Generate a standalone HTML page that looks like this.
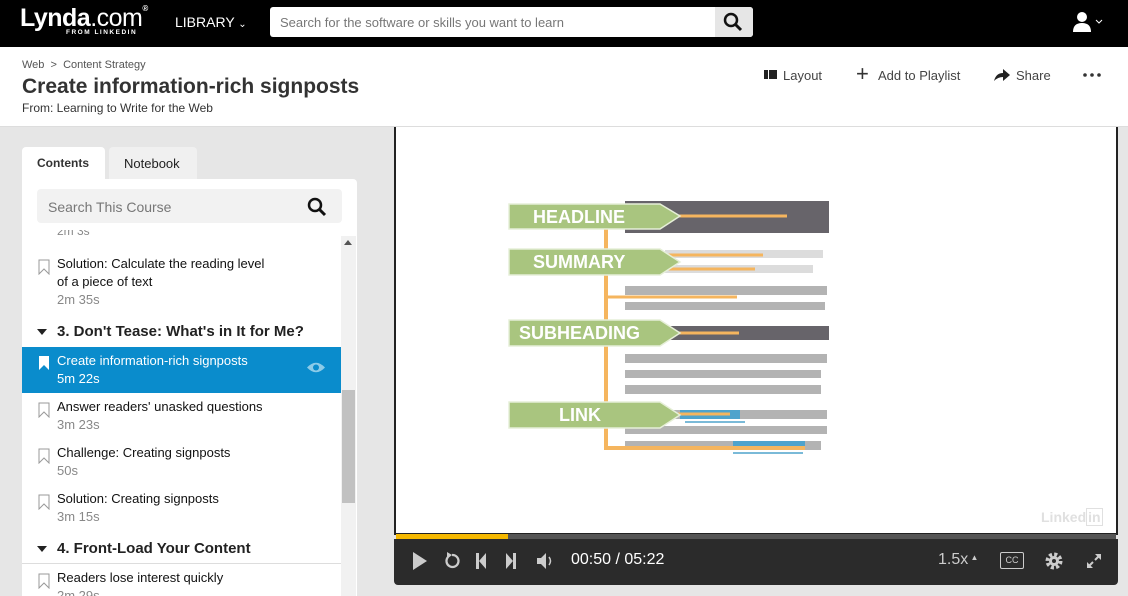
<!DOCTYPE html>
<html><head><meta charset="utf-8"><style>
*{margin:0;padding:0;box-sizing:border-box}
html,body{width:1128px;height:596px;overflow:hidden}
body{background:#e6e6e6;font-family:"Liberation Sans",sans-serif;position:relative}
.a{position:absolute}
.top{left:0;top:0;width:1128px;height:47px;background:#000}
.hdr{left:0;top:47px;width:1128px;height:80px;background:#fff;border-bottom:1px solid #ddd}
.item{position:absolute;left:22px;width:319px;font-size:13px;color:#111}
.item .t{position:absolute;left:35px;top:0;line-height:18px}
.item .d{color:#888}
.bm{position:absolute;left:16px;top:4px}
.sec{position:absolute;left:22px;width:319px;font-size:15px;font-weight:bold;color:#222}
.sec span{position:absolute;left:35px}
.tri{position:absolute;left:15px;top:6px;width:0;height:0;border-left:5px solid transparent;border-right:5px solid transparent;border-top:6px solid #222}
</style></head><body>
<div class="a top"></div>
<div class="a" style="left:20px;top:4px;color:#fff;font-size:25px;font-weight:bold;letter-spacing:-0.5px">Lynda<span style="font-weight:normal">.com</span><sup style="font-size:8px;vertical-align:top">®</sup></div>
<div class="a" style="left:66px;top:29px;color:#fff;font-size:6.5px;font-weight:bold;letter-spacing:1.5px">FROM LINKEDIN</div>
<div class="a" style="left:175px;top:14px;color:#fff;font-size:14px">LIBRARY <span style="font-size:10px">&#8964;</span></div>
<div class="a" style="left:270px;top:7px;width:483px;height:30px;background:#fff;border-radius:3px"></div>
<div class="a" style="left:280px;top:15px;font-size:13px;color:#777">Search for the software or skills you want to learn</div>
<div class="a" style="left:715px;top:7px;width:38px;height:30px;background:#e6e6e6;border-radius:0 3px 3px 0"></div>
<svg class="a" style="left:723px;top:12px" width="20" height="20"><circle cx="8" cy="8" r="6" stroke="#111" stroke-width="2.5" fill="none"/><line x1="12.5" y1="12.5" x2="18" y2="18" stroke="#111" stroke-width="3"/></svg>
<svg class="a" style="left:1072px;top:11px" width="36" height="22"><circle cx="10" cy="6" r="5" fill="#fff"/><path d="M1 21 Q1 12 10 12 Q19 12 19 21Z" fill="#fff"/><path d="M24 9 l3 3 l3 -3" stroke="#fff" fill="none"/></svg>
<div class="a hdr"></div>
<div class="a" style="left:22px;top:59px;font-size:11px;color:#555">Web &nbsp;&gt;&nbsp; Content Strategy</div>
<div class="a" style="left:22px;top:75px;font-size:21px;font-weight:bold;color:#333">Create information-rich signposts</div>
<div class="a" style="left:22px;top:101px;font-size:12px;color:#333">From: Learning to Write for the Web</div>
<div class="a" style="left:764px;top:70px;width:4px;height:9px;background:#222"></div><div class="a" style="left:769px;top:70px;width:8px;height:9px;background:#222"></div>
<div class="a" style="left:783px;top:68px;font-size:13px;color:#444">Layout</div>
<div class="a" style="left:856px;top:61px;font-size:22px;color:#333;font-weight:100">+</div>
<div class="a" style="left:878px;top:68px;font-size:13px;color:#444">Add to Playlist</div>
<svg class="a" style="left:993px;top:68px" width="18" height="14"><path d="M1 13 Q3 5 10 5 V1 L17 7 L10 13 V9 Q5 9 1 13Z" fill="#222"/></svg>
<div class="a" style="left:1016px;top:68px;font-size:13px;color:#444">Share</div>
<svg class="a" style="left:1082px;top:72px" width="20" height="6"><circle cx="3" cy="3" r="1.8" fill="#333"/><circle cx="10" cy="3" r="1.8" fill="#333"/><circle cx="17" cy="3" r="1.8" fill="#333"/></svg>

<div class="a" style="left:22px;top:147px;width:83px;height:34px;background:#fff;border-radius:4px 4px 0 0"></div>
<div class="a" style="left:37px;top:156px;font-size:12px;font-weight:bold;color:#333">Contents</div>
<div class="a" style="left:109px;top:147px;width:88px;height:32px;background:#f0f0f0;border-radius:4px 4px 0 0"></div>
<div class="a" style="left:124px;top:156px;font-size:13px;color:#222">Notebook</div>
<div class="a" style="left:22px;top:179px;width:335px;height:417px;background:#fff;border-radius:0 4px 0 0"></div>
<div class="a" style="left:37px;top:189px;width:305px;height:34px;background:#f2f2f2;border-radius:4px"></div>
<div class="a" style="left:48px;top:199px;font-size:14px;color:#777">Search This Course</div>
<svg class="a" style="left:307px;top:197px" width="20" height="20"><circle cx="8" cy="8" r="6" stroke="#111" stroke-width="2.5" fill="none"/><line x1="12.5" y1="12.5" x2="18" y2="18" stroke="#111" stroke-width="3"/></svg>
<div class="a" style="left:341px;top:236px;width:15px;height:360px;background:#f1f1f1"></div>
<div class="a" style="left:342px;top:390px;width:13px;height:113px;background:#c1c1c1"></div>
<div class="a" style="left:344px;top:240px;border-left:4px solid transparent;border-right:4px solid transparent;border-bottom:5px solid #555"></div>
<div class="a" style="left:57px;top:230px;font-size:12px;color:#888;height:8px;overflow:hidden;line-height:3px">2m 3s</div>

<div class="item" style="top:255px;height:50px"><svg class="bm" width="12" height="16"><path d="M1 1H11V15L6 10L1 15Z" stroke="#999" fill="none"/></svg><div class="t">Solution: Calculate the reading level<br>of a piece of text<br><span class="d">2m 35s</span></div></div>
<div class="sec" style="top:323px"><div class="tri"></div><span>3. Don't Tease: What's in It for Me?</span></div>
<div class="item" style="top:347px;height:46px;background:#0a8ccc;color:#fff"><svg class="bm" style="top:8px" width="12" height="16"><path d="M1 1H11V15L6 10L1 15Z" fill="#fff"/></svg><div class="t" style="top:5px">Create information-rich signposts<br>5m 22s</div><svg style="position:absolute;left:284px;top:14px" width="20" height="13"><path d="M1 6.5 Q10 -3 19 6.5 Q10 16 1 6.5Z" fill="#8ccbe8"/><circle cx="10" cy="6.5" r="3" fill="#0a8ccc"/></svg></div>
<div class="item" style="top:398px"><svg class="bm" width="12" height="16"><path d="M1 1H11V15L6 10L1 15Z" stroke="#999" fill="none"/></svg><div class="t">Answer readers' unasked questions<br><span class="d">3m 23s</span></div></div>
<div class="item" style="top:444px"><svg class="bm" width="12" height="16"><path d="M1 1H11V15L6 10L1 15Z" stroke="#999" fill="none"/></svg><div class="t">Challenge: Creating signposts<br><span class="d">50s</span></div></div>
<div class="item" style="top:490px"><svg class="bm" width="12" height="16"><path d="M1 1H11V15L6 10L1 15Z" stroke="#999" fill="none"/></svg><div class="t">Solution: Creating signposts<br><span class="d">3m 15s</span></div></div>
<div class="sec" style="top:540px"><div class="tri"></div><span>4. Front-Load Your Content</span></div>
<div class="a" style="left:22px;top:563px;width:319px;height:1px;background:#ddd"></div>
<div class="item" style="top:569px;height:27px;overflow:hidden"><svg class="bm" width="12" height="16"><path d="M1 1H11V15L6 10L1 15Z" stroke="#999" fill="none"/></svg><div class="t">Readers lose interest quickly<br><span class="d">2m 29s</span></div></div>

<div class="a" style="left:394px;top:127px;width:724px;height:408px;background:#fff;border:2px solid #222;border-top:none"></div>
<svg class="a" style="left:505px;top:198px" width="330" height="260">
<rect x="120" y="3" width="204" height="32" fill="#67646a"/>
<rect x="160" y="52" width="158" height="8" fill="#dcdcdc"/><rect x="160" y="67" width="148" height="8" fill="#dcdcdc"/>
<rect x="120" y="88" width="202" height="9" fill="#b3b3b3"/><rect x="120" y="104" width="200" height="8" fill="#b3b3b3"/>
<rect x="160" y="128" width="164" height="14" fill="#67646a"/>
<rect x="120" y="156" width="202" height="9" fill="#b3b3b3"/><rect x="120" y="172" width="196" height="8" fill="#b3b3b3"/><rect x="120" y="187" width="196" height="9" fill="#b3b3b3"/>
<rect x="120" y="212" width="202" height="9" fill="#b3b3b3"/><rect x="175" y="212" width="60" height="9" fill="#4fa3cc"/>
<rect x="120" y="228" width="202" height="8" fill="#b3b3b3"/>
<rect x="120" y="243" width="196" height="9" fill="#b3b3b3"/><rect x="228" y="243" width="72" height="9" fill="#4fa3cc"/>
<line x1="180" y1="224" x2="240" y2="224" stroke="#4fa3cc" stroke-width="1.5"/><line x1="228" y1="255" x2="298" y2="255" stroke="#4fa3cc" stroke-width="1.5"/>
<path d="M101 30 V250 H300" stroke="#f5b55e" stroke-width="4" fill="none"/><line x1="101" y1="99" x2="232" y2="99" stroke="#f5b55e" stroke-width="3"/>
<g stroke="#f5b55e" stroke-width="3"><line x1="170" y1="18" x2="282" y2="18"/><line x1="160" y1="57" x2="258" y2="57"/><line x1="160" y1="71" x2="250" y2="71"/><line x1="160" y1="135" x2="234" y2="135"/><line x1="170" y1="216" x2="225" y2="216"/></g>
<g fill="#a9c57f" stroke="#e6efd8" stroke-width="1.5"><path d="M4 6H155L175 18L155 31H4Z"/><path d="M4 51H155L175 64L155 77H4Z"/><path d="M4 122H155L175 135L155 148H4Z"/><path d="M4 204H155L175 217L155 230H4Z"/></g>
<g fill="#fff" font-weight="bold" font-size="18" font-family="Liberation Sans"><text x="28" y="25">HEADLINE</text><text x="28" y="70">SUMMARY</text><text x="14" y="141">SUBHEADING</text><text x="54" y="223">LINK</text></g>
</svg>
<div class="a" style="left:1041px;top:509px;font-size:14px;font-weight:bold;color:#e0e0e0">Linked<span style="border:1.5px solid #e0e0e0;padding:0 1px">in</span></div>
<div class="a" style="left:396px;top:534px;width:720px;height:5px;background:#555"></div>
<div class="a" style="left:396px;top:534px;width:112px;height:5px;background:#f5b800"></div>
<div class="a" style="left:394px;top:539px;width:724px;height:46px;background:#2b2b2b;border-radius:0 0 4px 4px"></div>
<svg class="a" style="left:410px;top:550px" width="150" height="22"><path d="M3 2L17 11L3 20Z" fill="#ccc"/><path d="M38 7 A6 6 0 1 0 42 5" stroke="#ccc" stroke-width="2.3" fill="none"/><path d="M37 2 L42 5 L37 9Z" fill="#ccc"/><rect x="66" y="3" width="3" height="16" fill="#ccc"/><path d="M76 3 L69 11 L76 19Z" fill="#ccc"/><rect x="103" y="3" width="3" height="16" fill="#ccc"/><path d="M96 3 L103 11 L96 19Z" fill="#ccc"/><path d="M127 8H131L136 3V19L131 14H127Z" fill="#ccc"/><path d="M139 7Q142 11 139 15" stroke="#ccc" stroke-width="1.5" fill="none"/></svg>
<div class="a" style="left:571px;top:551px;font-size:16px;color:#fff">00:50 / 05:22</div>
<div class="a" style="left:938px;top:551px;font-size:16px;color:#ccc">1.5x<span style="font-size:8px;vertical-align:4px"> ▲</span></div>
<div class="a" style="left:1000px;top:552px;width:24px;height:17px;border:1.5px solid #ccc;border-radius:2px;color:#ccc;font-size:9px;text-align:center;line-height:14px">CC</div>
<svg class="a" style="left:1044px;top:551px" width="20" height="20"><circle cx="10" cy="10" r="6.5" fill="none" stroke="#ccc" stroke-width="4" stroke-dasharray="3 2.1"/><circle cx="10" cy="10" r="5" fill="#ccc"/><circle cx="10" cy="10" r="2" fill="#2b2b2b"/></svg>
<svg class="a" style="left:1085px;top:552px" width="18" height="18"><path d="M10 2H16V8Z M8 16H2V10Z" fill="#ccc"/><path d="M14 4L10 8M4 14L8 10" stroke="#ccc" stroke-width="2"/></svg>
</body></html>
